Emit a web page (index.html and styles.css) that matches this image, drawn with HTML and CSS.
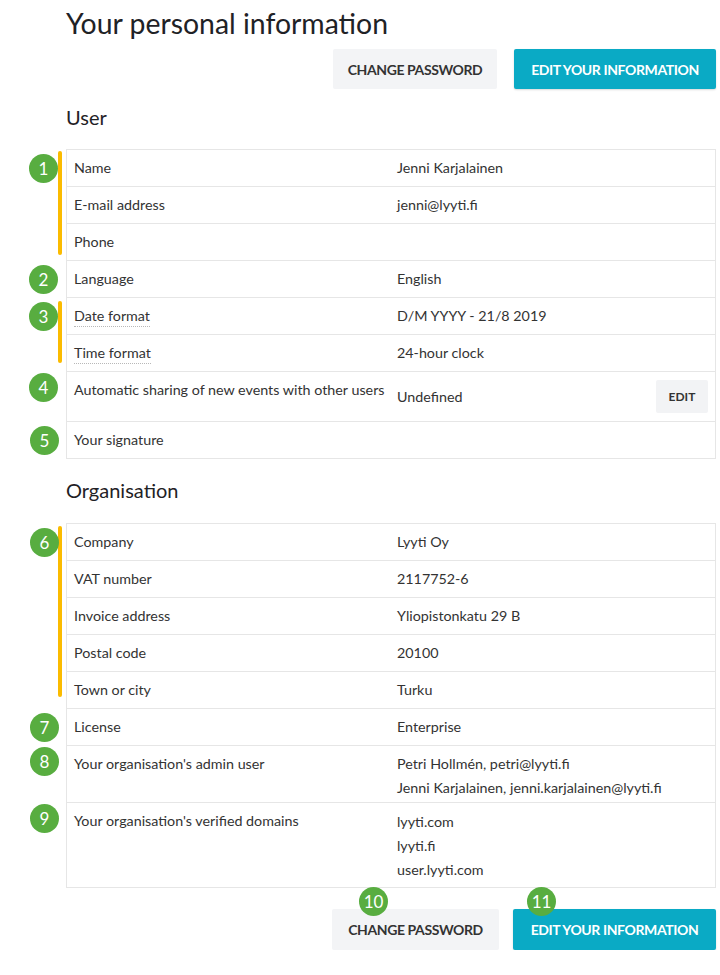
FILE: index.html
```html
<!DOCTYPE html>
<html lang="en">
<head>
  <meta charset="UTF-8">
  <title>Your personal information</title>
  <link rel="stylesheet" href="styles.css">
</head>
<body>
  <div class="page">
    <h1>Your personal information</h1>
    <div class="actions">
      <button class="btn btn-grey">Change password</button>
      <button class="btn btn-teal">Edit your information</button>
    </div>

    <h2>User</h2>
    <div class="info-table">
      <div class="group group-1">
        <div class="row">
          <span class="badge b-row">1</span>
          <div class="label">Name</div>
          <div class="value">Jenni Karjalainen</div>
        </div>
        <div class="row">
          <div class="label">E-mail address</div>
          <div class="value">jenni@lyyti.fi</div>
        </div>
        <div class="row">
          <div class="label">Phone</div>
          <div class="value"></div>
        </div>
      </div>
      <div class="row">
        <span class="badge b-row">2</span>
        <div class="label">Language</div>
        <div class="value">English</div>
      </div>
      <div class="group group-3">
        <div class="row">
          <span class="badge b-row">3</span>
          <div class="label"><span class="hint">Date format</span></div>
          <div class="value">D/M YYYY - 21/8 2019</div>
        </div>
        <div class="row">
          <div class="label"><span class="hint">Time format</span></div>
          <div class="value">24-hour clock</div>
        </div>
      </div>
      <div class="row row-edit">
        <span class="badge b-top">4</span>
        <div class="label">Automatic sharing of new events with other users</div>
        <div class="value value-mid">Undefined</div>
        <button class="btn-small">Edit</button>
      </div>
      <div class="row">
        <span class="badge b-row b-shift">5</span>
        <div class="label">Your signature</div>
        <div class="value"></div>
      </div>
    </div>

    <h2>Organisation</h2>
    <div class="info-table">
      <div class="group group-6">
        <div class="row">
          <span class="badge b-row b-shift">6</span>
          <div class="label">Company</div>
          <div class="value">Lyyti Oy</div>
        </div>
        <div class="row">
          <div class="label">VAT number</div>
          <div class="value">2117752-6</div>
        </div>
        <div class="row">
          <div class="label">Invoice address</div>
          <div class="value">Yliopistonkatu 29 B</div>
        </div>
        <div class="row">
          <div class="label">Postal code</div>
          <div class="value">20100</div>
        </div>
        <div class="row">
          <div class="label">Town or city</div>
          <div class="value">Turku</div>
        </div>
      </div>
      <div class="row">
        <span class="badge b-row b-shift">7</span>
        <div class="label">License</div>
        <div class="value">Enterprise</div>
      </div>
      <div class="row row-multi">
        <span class="badge b-top b-shift">8</span>
        <div class="label">Your organisation's admin user</div>
        <div class="value list">
          <div>Petri Hollmén, petri@lyyti.fi</div>
          <div>Jenni Karjalainen, jenni.karjalainen@lyyti.fi</div>
        </div>
      </div>
      <div class="row row-multi row-domains">
        <span class="badge b-top b-shift">9</span>
        <div class="label">Your organisation's verified domains</div>
        <div class="value list">
          <div>lyyti.com</div>
          <div>lyyti.fi</div>
          <div>user.lyyti.com</div>
        </div>
      </div>
    </div>

    <div class="actions actions-bottom">
      <button class="btn btn-grey"><span class="badge b-btn b-10">10</span>Change password</button>
      <button class="btn btn-teal"><span class="badge b-btn b-11">11</span>Edit your information</button>
    </div>
  </div>
</body>
</html>
```

FILE: styles.css
```css
body {
  margin: 0;
  background: #fff;
  font-family: Lato, "Open Sans", sans-serif;
  color: #333;
}
.page {
  margin-left: 66px;
  width: 650px;
}
h1 {
  margin: 0;
  padding-top: 6px;
  font-size: 28.4px;
  line-height: 34px;
  font-weight: 400;
  color: #1f2226;
}
h2 {
  margin: 16px 0 20px;
  font-size: 20px;
  line-height: 24px;
  font-weight: 400;
  color: #1f2226;
}
.info-table + h2 {
  margin-top: 19px;
  margin-bottom: 21px;
}
.actions {
  display: flex;
  justify-content: flex-end;
  gap: 17px;
  margin-top: 9px;
}
.actions-bottom {
  gap: 14px;
  margin-top: 21px;
}
.btn {
  position: relative;
  height: 40px;
  padding: 0;
  border: none;
  border-radius: 2px;
  font-family: inherit;
  font-size: 14px;
  font-weight: 700;
  letter-spacing: -0.4px;
  white-space: nowrap;
  text-transform: uppercase;
  cursor: pointer;
}
.btn-grey {
  width: 164px;
  background: #f3f4f6;
  color: #333;
}
.btn-teal {
  width: 202px;
  background: #0aaac5;
  color: #fff;
  box-shadow: 0 1px 2px rgba(0,0,0,0.15);
}
.actions-bottom .btn {
  height: 41px;
}
.actions-bottom .btn-grey {
  width: 167px;
}
.actions-bottom .btn-teal {
  width: 203px;
}

.info-table {
  border: 1px solid #e6e6e6;
  border-bottom: none;
}
.group {
  position: relative;
}
.group::before {
  content: "";
  position: absolute;
  left: -9px;
  width: 4px;
  border-radius: 2px;
  background: #fbbb00;
}
.group-1::before {
  top: 1px;
  bottom: 6px;
}
.group-3::before {
  top: 3px;
  bottom: 9px;
}
.group-6::before {
  top: 2px;
  bottom: 12px;
}
.row {
  position: relative;
  display: flex;
  min-height: 36px;
  border-bottom: 1px solid #e6e6e6;
  font-size: 14.3px;
}
.label {
  width: 323px;
  flex-shrink: 0;
  padding-left: 7px;
  line-height: 36px;
}
.value {
  flex: 1;
  line-height: 36px;
}
.hint {
  border-bottom: 1px dotted #b8b8b8;
  padding-bottom: 2px;
}
.row-edit {
  min-height: 49px;
  align-items: flex-start;
}
.value-mid {
  align-self: center;
}
.btn-small {
  margin: 8px 7px 0 0;
  width: 52px;
  height: 33px;
  border: none;
  border-radius: 2px;
  background: #f2f3f5;
  color: #333;
  font-family: inherit;
  font-size: 12px;
  font-weight: 700;
  text-transform: uppercase;
}
.row-multi .value {
  line-height: 24px;
  padding: 6px 0 2px;
}
.row-domains .value {
  padding: 7px 0 5px;
}

.badge {
  position: absolute;
  width: 29px;
  height: 29px;
  border-radius: 50%;
  background: #58ad40;
  color: #fff;
  font-size: 17px;
  font-weight: 400;
  letter-spacing: 0;
  line-height: 29px;
  text-align: center;
}
.b-row {
  left: -38px;
  top: 4px;
}
.b-top {
  left: -38px;
  top: 1px;
}
.b-shift {
  left: -37px;
}
.b-btn {
  top: -22px;
}
.b-10 {
  left: 27px;
}
.b-11 {
  left: 14px;
}
```
